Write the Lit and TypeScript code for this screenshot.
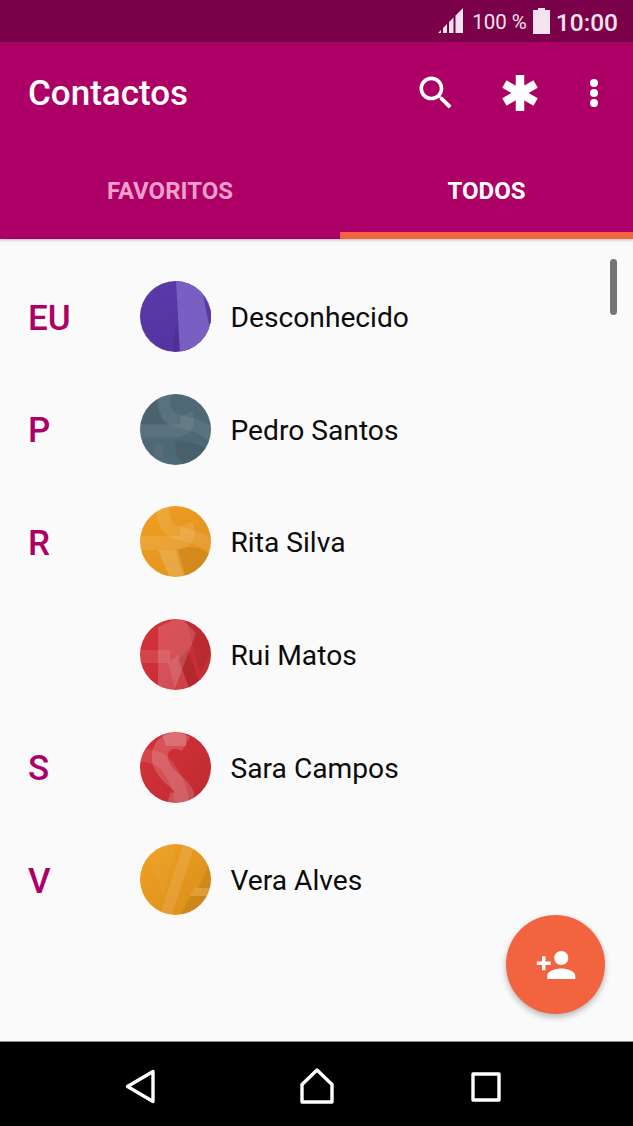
import { LitElement, html, css, svg } from 'lit';
import { customElement } from 'lit/decorators.js';

type Shape = { d: string; fill?: string; stroke?: string; w?: number };
type Contact = { letter: string; name: string; bg: string; shapes: Shape[] };

const SOFT = 'rgba(255,255,255,0.07)';
const LIGHT = 'rgba(255,255,255,0.1)';
const LIGHTER = 'rgba(255,255,255,0.17)';
const DARK = 'rgba(0,0,0,0.07)';

const contacts: Contact[] = [
  {
    letter: 'EU',
    name: 'Desconhecido',
    bg: 'linear-gradient(160deg, #5a3aa9, #54339f)',
    shapes: [
      { d: 'M36 0 L71 0 L71 71 L40 71 Z', fill: '#7a5fc2' },
      { d: 'M63 14 L71 28 L71 42 L69 44 Z', fill: '#5a3aa9' },
      { d: 'M33 71 L36 40 L40 71 Z', fill: 'rgba(0,0,0,0.08)' },
    ],
  },
  {
    letter: 'P',
    name: 'Pedro Santos',
    bg: '#4e6874',
    shapes: [
      { d: 'M-2 37 L34 37 C46 37 50 30 46 20', stroke: SOFT, w: 13 },
      { d: 'M26 -4 C20 12 26 26 42 28 C55 30 66 36 74 42', stroke: SOFT, w: 13 },
      { d: 'M-2 -2 L20 -2 C18 10 20 22 26 30 L-2 30 Z', fill: 'rgba(0,0,0,0.04)' },
      { d: 'M36 46 C50 48 62 50 72 58 L60 72 L46 70 C36 66 34 56 36 46 Z', fill: DARK },
      { d: 'M20 50 C16 58 20 66 28 74', stroke: 'rgba(255,255,255,0.04)', w: 8 },
    ],
  },
  {
    letter: 'R',
    name: 'Rita Silva',
    bg: 'linear-gradient(135deg, #ef9f22, #e0911d)',
    shapes: [
      { d: 'M-2 37 L34 37 C46 37 50 30 46 18', stroke: LIGHT, w: 14 },
      { d: 'M24 -4 C20 12 26 26 42 28 C55 30 66 36 74 42', stroke: LIGHT, w: 13 },
      { d: 'M18 44 L38 44 L46 72 L30 72 Z', fill: LIGHTER },
      { d: 'M36 44 C48 38 62 42 72 50 L66 66 L46 72 C40 62 38 52 36 44 Z', fill: DARK },
    ],
  },
  {
    letter: '',
    name: 'Rui Matos',
    bg: 'linear-gradient(135deg, #d5333a, #c22b32)',
    shapes: [
      { d: 'M18 8 L40 -2 L56 14 L34 72 L18 72 Z', fill: LIGHTER },
      { d: 'M-2 31 L30 31 L30 44 L-2 44 Z', fill: LIGHT },
      { d: 'M28 44 L38 36 L50 72 L36 72 Z', fill: LIGHT },
      { d: 'M46 0 L72 -2 L72 30 L60 54 Z', fill: DARK },
      { d: 'M38 42 L48 30 L60 66 L50 70 Z', fill: 'rgba(0,0,0,0.1)' },
    ],
  },
  {
    letter: 'S',
    name: 'Sara Campos',
    bg: 'linear-gradient(135deg, #d5333a, #bd2a30)',
    shapes: [
      { d: 'M-2 22 C14 24 24 28 30 38 C36 48 42 58 42 74', stroke: LIGHT, w: 14 },
      { d: 'M46 12 C32 4 18 12 20 28 C24 46 42 50 46 62 C44 68 34 70 28 68', stroke: LIGHTER, w: 16 },
      { d: 'M22 2 L46 -2 L46 14 L26 14 Z', fill: LIGHTER },
    ],
  },
  {
    letter: 'V',
    name: 'Vera Alves',
    bg: 'linear-gradient(135deg, #f0a022, #d98e1b)',
    shapes: [
      { d: 'M37 -2 L23 52 L10 16 L-2 -2 Z', fill: 'rgba(255,255,255,0.03)' },
      { d: 'M50 -2 L25 74', stroke: LIGHT, w: 11 },
      { d: 'M72 14 L58 44 L72 44 Z', fill: DARK },
      { d: 'M54 44 L72 44 L72 52 L50 52 Z', fill: LIGHT },
      { d: 'M50 52 L72 52 L72 72 L40 72 Z', fill: DARK },
    ],
  },
];

@customElement('app-root')
export class AppRoot extends LitElement {
  static styles = css`
    :host {
      display: flex;
      flex-direction: column;
      position: relative;
      height: 1126px;
      overflow: hidden;
      background: #fafafa;
      font-family: Roboto, 'Noto Sans', sans-serif;
    }
    .status {
      height: 42px;
      flex: none;
      box-sizing: border-box;
      background: #7a0049;
      color: #f3e3ec;
      display: flex;
      align-items: center;
      justify-content: flex-end;
      padding: 2px 15px 0 0;
    }
    .status svg {
      margin-top: -2px;
    }
    .status .pct {
      font-size: 20.5px;
      margin: 0 6px 0 8px;
    }
    .status .time {
      font-size: 24.5px;
      font-weight: 500;
      margin-left: 6px;
    }
    .bar {
      height: 197px;
      flex: none;
      background: #ad0066;
      color: #fff;
      display: flex;
      flex-direction: column;
      box-shadow: 0 1px 3px rgba(0, 0, 0, 0.25);
      z-index: 1;
    }
    .top {
      height: 102px;
      flex: none;
      display: flex;
      align-items: center;
      padding: 0 27px 0 28px;
    }
    .title {
      font-size: 35px;
      font-weight: 500;
    }
    .actions {
      margin-left: auto;
      display: flex;
      align-items: center;
      gap: 44px;
    }
    .actions svg {
      display: block;
      fill: #fff;
    }
    .tabs {
      flex: 1;
      display: grid;
      grid-template-columns: 340px 293px;
    }
    .tab {
      display: flex;
      align-items: center;
      justify-content: center;
      font-size: 24px;
      font-weight: 700;
      padding-top: 6px;
      color: #ef9fca;
      border-bottom: 7px solid transparent;
      box-sizing: border-box;
    }
    .tab.on {
      color: #fff;
      border-bottom-color: #f26440;
    }
    .list {
      flex: 1;
      padding-top: 21.4px;
    }
    .row {
      height: 112.6px;
      display: flex;
      align-items: center;
    }
    .letter {
      width: 140px;
      padding: 3px 0 0 28px;
      box-sizing: border-box;
      font-size: 35px;
      font-weight: 500;
      color: #ad0066;
    }
    .avatar {
      width: 71px;
      height: 71px;
      border-radius: 50%;
      overflow: hidden;
      flex: none;
    }
    .avatar svg {
      display: block;
    }
    .name {
      margin-left: 19.5px;
      padding-top: 2px;
      font-size: 28.2px;
      color: #0c0c0c;
    }
    .thumb {
      position: absolute;
      left: 610px;
      top: 259px;
      width: 7px;
      height: 56px;
      border-radius: 4px;
      background: #757575;
    }
    .fab {
      position: absolute;
      left: 506px;
      top: 915px;
      width: 99px;
      height: 99px;
      border-radius: 50%;
      background: #f26440;
      box-shadow: 0 3px 6px rgba(0, 0, 0, 0.28);
      display: flex;
      align-items: center;
      justify-content: center;
    }
    .fab svg {
      fill: #fff;
    }
    .nav {
      height: 85px;
      flex: none;
      box-sizing: border-box;
      background: #000;
      border-top: 1px solid #8c8c8c;
      display: flex;
      align-items: center;
      padding: 6px 0 0 120px;
    }
    .nav svg {
      display: block;
      fill: none;
      stroke: #fff;
      stroke-width: 3.4;
      stroke-linejoin: round;
    }
    .nav .home {
      margin-left: 137px;
    }
    .nav .recent {
      margin-left: 129px;
    }
  `;

  renderAvatar(c: Contact) {
    return html`<div class="avatar" style="background:${c.bg}">
      <svg width="71" height="71" viewBox="0 0 71 71">
        ${c.shapes.map(
          (s) => svg`<path d=${s.d} fill=${s.fill ?? 'none'} stroke=${s.stroke ?? 'none'} stroke-width=${s.w ?? 0}></path>`
        )}
      </svg>
    </div>`;
  }

  render() {
    return html`
      <div class="status">
        <svg width="26" height="26" viewBox="0 0 26 26" fill="#f3e3ec">
          <path d="M0 25 L3 22 L3 25 Z M5 25 L5 20 L9 16 L9 25 Z M11 25 L11 14 L15.5 9.5 L15.5 25 Z M17.5 25 L17.5 7.5 L25 0 L25 25 Z"></path>
        </svg>
        <span class="pct">100 %</span>
        <svg width="17" height="26" viewBox="0 0 17 26" fill="#f3e3ec">
          <path d="M5 0 H12 V2 H17 V26 H0 V2 H5 Z"></path>
        </svg>
        <span class="time">10:00</span>
      </div>
      <div class="bar">
        <div class="top">
          <span class="title">Contactos</span>
          <div class="actions">
            <svg width="44" height="44" viewBox="0 0 24 24">
              <path d="M15.5 14h-.79l-.28-.27C15.41 12.59 16 11.11 16 9.5 16 5.91 13.09 3 9.5 3S3 5.91 3 9.5 5.91 16 9.5 16c1.61 0 3.09-.59 4.23-1.57l.27.28v.79l5 4.99L20.49 19l-4.99-5zm-6 0C7.01 14 5 11.99 5 9.5S7.01 5 9.5 5 14 7.01 14 9.5 11.99 14 9.5 14z"></path>
            </svg>
            <svg width="36" height="36" viewBox="0 0 36 36">
              <g stroke="#fff" stroke-width="8.5">
                <path d="M18 0 V36"></path>
                <path d="M2.4 9 L33.6 27"></path>
                <path d="M2.4 27 L33.6 9"></path>
              </g>
            </svg>
            <svg width="24" height="30" viewBox="0 0 24 30">
              <circle cx="12" cy="5" r="4"></circle>
              <circle cx="12" cy="15" r="4"></circle>
              <circle cx="12" cy="25" r="4"></circle>
            </svg>
          </div>
        </div>
        <div class="tabs">
          <div class="tab">FAVORITOS</div>
          <div class="tab on">TODOS</div>
        </div>
      </div>
      <div class="list">
        ${contacts.map(
          (c) => html`<div class="row">
            <div class="letter">${c.letter}</div>
            ${this.renderAvatar(c)}
            <div class="name">${c.name}</div>
          </div>`
        )}
      </div>
      <div class="thumb"></div>
      <div class="fab">
        <svg width="42" height="42" viewBox="0 0 24 24">
          <path d="M15 12c2.21 0 4-1.79 4-4s-1.79-4-4-4-4 1.79-4 4 1.79 4 4 4zm-9-2V7H4v3H1v2h3v3h2v-3h3v-2H6zm9 4c-2.67 0-8 1.34-8 4v2h16v-2c0-2.66-5.33-4-8-4z"></path>
        </svg>
      </div>
      <div class="nav">
        <svg width="40" height="40" viewBox="0 0 40 40">
          <path d="M33 4.5 V34.5 L7.5 19.5 Z"></path>
        </svg>
        <svg class="home" width="40" height="40" viewBox="0 0 40 40">
          <path d="M20 3 L35 17.5 V35 H5 V17.5 Z"></path>
        </svg>
        <svg class="recent" width="40" height="40" viewBox="0 0 40 40">
          <path d="M7 7 H33 V33 H7 Z"></path>
        </svg>
      </div>
    `;
  }
}
